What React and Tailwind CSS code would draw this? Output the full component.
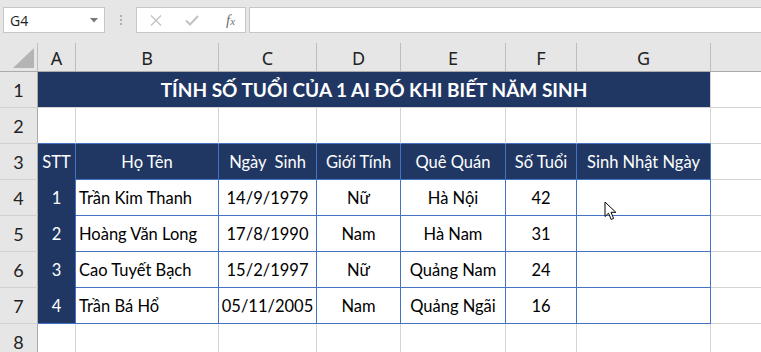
import React from 'react';

const colWidths = ['w-[38px]', 'w-[143px]', 'w-[98px]', 'w-[84px]', 'w-[105px]', 'w-[71px]', 'w-[134px]'];
const letters = ['A', 'B', 'C', 'D', 'E', 'F', 'G'];

const headers = ['STT', 'Họ Tên', 'Ngày  Sinh', 'Giới Tính', 'Quê Quán', 'Số Tuổi', 'Sinh Nhật Ngày'];

const people = [
  [1, 'Trần Kim Thanh', '14/9/1979', 'Nữ', 'Hà Nội', 42],
  [2, 'Hoàng Văn Long', '17/8/1990', 'Nam', 'Hà Nam', 31],
  [3, 'Cao Tuyết Bạch', '15/2/1997', 'Nữ', 'Quảng Nam', 24],
  [4, 'Trần Bá Hổ', '05/11/2005', 'Nam', 'Quảng Ngãi', 16],
];

const cellFont = { fontFamily: 'Lato, "Noto Sans", sans-serif' };

const RowHead = ({ n }) => (
  <div className="w-[38px] shrink-0 h-full bg-[#e6e6e6] border-r border-r-[#ababab] border-b border-b-[#d0d0d0] flex items-center justify-center text-[18px] text-[#222] pt-[2px]">
    {n}
  </div>
);

const Filler = ({ last }) => (
  <div className={`flex-1 h-full border-b ${last ? 'border-b-transparent' : 'border-b-[#d4d4d4]'}`} />
);

const Toolbar = () => (
  <div className="h-[43px] bg-[#e6e6e6] flex items-start pt-[7px]" style={{ fontFamily: '"Open Sans", sans-serif' }}>
    <div className="ml-[3px] w-[102px] h-[26px] bg-white border border-[#c6c6c6] flex items-center pl-[6px] pr-[6px] text-[14px] text-[#222]">
      <span className="flex-1">G4</span>
      <svg width="8" height="5" viewBox="0 0 8 5"><path d="M0 0h8L4 4.5z" fill="#777" /></svg>
    </div>
    <div className="w-[31px] h-[26px] flex flex-col items-center justify-center gap-[2px]">
      <span className="w-[2px] h-[2px] bg-[#b0b0b0]" />
      <span className="w-[2px] h-[2px] bg-[#b0b0b0]" />
      <span className="w-[2px] h-[2px] bg-[#b0b0b0]" />
    </div>
    <div className="w-[110px] h-[26px] bg-white border border-[#c6c6c6] flex items-center">
      <svg className="ml-[13px]" width="12" height="11" viewBox="0 0 12 11">
        <path d="M1 0.5L11 10.5M11 0.5L1 10.5" stroke="#c3c3c3" strokeWidth="1.4" />
      </svg>
      <svg className="ml-[23px]" width="14" height="11" viewBox="0 0 14 11">
        <path d="M1 5.5L5 9.5L13 1" stroke="#c3c3c3" strokeWidth="2" fill="none" />
      </svg>
      <span className="ml-[27px] text-[15px] italic text-[#6f6f6f] leading-none" style={{ fontFamily: '"Liberation Serif", serif' }}>
        f<span className="text-[11px]">x</span>
      </span>
    </div>
    <div className="ml-[3px] flex-1 -mr-[4px] h-[26px] bg-white border border-[#c6c6c6]" />
  </div>
);

const ColumnHeader = () => (
  <div className="flex h-[29px] bg-[#e6e6e6] border-b border-b-[#ababab]">
    <div className="w-[38px] shrink-0 h-full border-r border-r-[#bdbdbd] relative">
      <svg className="absolute left-[13px] top-[5px]" width="21" height="20" viewBox="0 0 21 20">
        <path d="M0 20L21 20L21 0Z" fill="#b4b4b4" />
      </svg>
    </div>
    {letters.map((l, i) => (
      <div key={l} className={`${colWidths[i]} shrink-0 h-full border-r border-r-[#bdbdbd] flex items-center justify-center text-[18px] text-[#222] pt-[2px]`}>
        {l}
      </div>
    ))}
    <div className="flex-1" />
  </div>
);

const Pointer = () => (
  <svg className="absolute left-[604px] top-[201px]" width="14" height="21" viewBox="0 0 14 21">
    <path d="M1 1L1 15.5L4.5 12.2L7.2 18.5L9.6 17.4L7 11.3L11.8 11.3Z" fill="#fff" stroke="#000" strokeWidth="1" strokeLinejoin="round" />
  </svg>
);

export default function App() {
  return (
    <div className="w-[761px] h-[352px] overflow-hidden bg-white relative">
      <Toolbar />
      <ColumnHeader />
      <div style={cellFont}>
        {/* row 1: title */}
        <div className="flex h-[36px]">
          <RowHead n={1} />
          <div className="w-[673px] shrink-0 h-full bg-[#203764] border-r border-r-[#d4d4d4] border-b border-b-[#d4d4d4] flex items-center justify-center text-white font-bold text-[19px] pt-[1px]">
            TÍNH SỐ TUỔI CỦA 1 AI ĐÓ KHI BIẾT NĂM SINH
          </div>
          <Filler />
        </div>

        {/* row 2: empty */}
        <div className="flex h-[36px]">
          <RowHead n={2} />
          {colWidths.map((w, i) => (
            <div key={i} className={`${w} shrink-0 h-full border-r border-r-[#d4d4d4] border-b border-b-[#4472c4]`} />
          ))}
          <Filler />
        </div>

        {/* row 3: headers */}
        <div className="flex h-[36px]">
          <RowHead n={3} />
          {headers.map((h, i) => (
            <div
              key={h}
              className={`${colWidths[i]} shrink-0 h-full bg-[#203764] border-r border-r-[#4472c4] border-b ${i === 0 ? 'border-b-[#203764]' : 'border-b-[#4472c4]'} flex items-center justify-center text-white text-[16.5px] whitespace-pre pt-[2px]`}
            >
              {h}
            </div>
          ))}
          <Filler />
        </div>

        {/* rows 4-7: data */}
        {people.map((p, r) => (
          <div key={p[0]} className="flex h-[36px]">
            <RowHead n={r + 4} />
            <div className={`${colWidths[0]} shrink-0 h-full bg-[#203764] border-r border-r-[#4472c4] border-b ${r === 3 ? 'border-b-[#4472c4]' : 'border-b-[#203764]'} flex items-center justify-center text-white text-[16.5px] pt-[2px]`}>
              {p[0]}
            </div>
            <div className={`${colWidths[1]} shrink-0 h-full border-r border-b border-[#4472c4] flex items-center pl-[3px] text-[16.5px] text-black pt-[2px]`}>
              {p[1]}
            </div>
            {[p[2], p[3], p[4], p[5], ''].map((v, i) => (
              <div key={i} className={`${colWidths[i + 2]} shrink-0 h-full border-r border-b border-[#4472c4] flex items-center justify-center text-[16.5px] text-black pt-[2px]`}>
                {v}
              </div>
            ))}
            <Filler />
          </div>
        ))}

        {/* row 8 */}
        <div className="flex h-[36px]">
          <RowHead n={8} />
          {colWidths.map((w, i) => (
            <div key={i} className={`${w} shrink-0 h-full border-r border-r-[#d4d4d4]`} />
          ))}
          <Filler last />
        </div>
      </div>
      <Pointer />
    </div>
  );
}
